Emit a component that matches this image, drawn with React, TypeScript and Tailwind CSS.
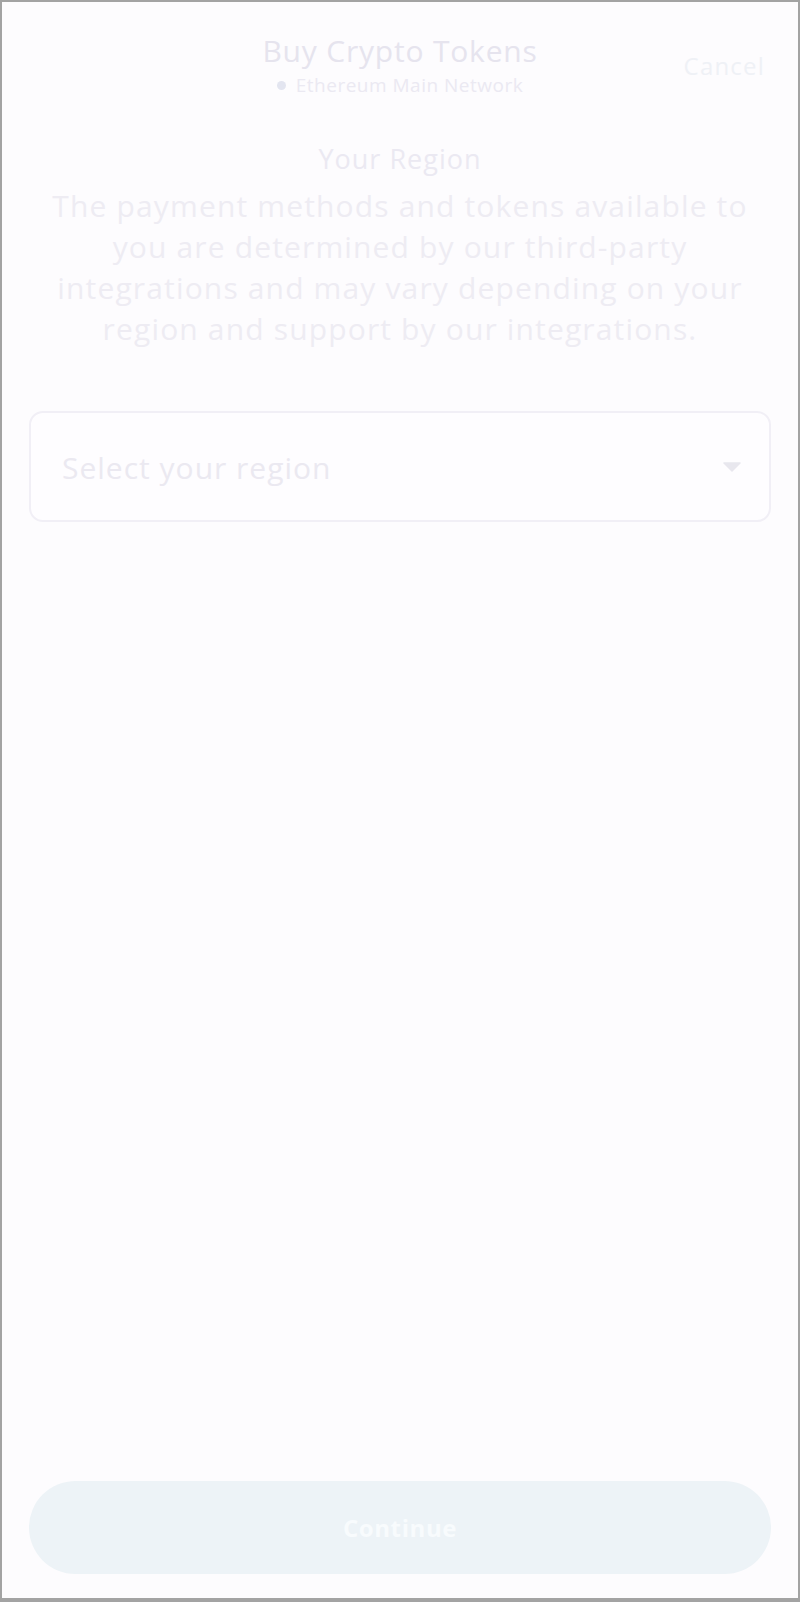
import React from 'react';

const FONT = { fontFamily: '"Open Sans", "Noto Sans", sans-serif' };

function Header() {
  return (
    <div className="relative pt-[31px] flex flex-col items-center">
      <h1 className="text-[30px] leading-[36px] tracking-[0.8px] text-[#e6e4ee]">Buy Crypto Tokens</h1>
      <div className="mt-[5px] flex items-center gap-[10px] text-[19px] leading-[22px] tracking-[0.5px] text-[#ebe9f2]">
        <span className="w-[9px] h-[9px] rounded-full bg-[#e3e5f0]" />
        <span>Ethereum Main Network</span>
      </div>
      <button className="absolute right-[33px] top-[49px] text-[24px] leading-[30px] tracking-[1.2px] text-[#eff1f6]">
        Cancel
      </button>
    </div>
  );
}

export default function App() {
  return (
    <div
      style={FONT}
      className="w-[800px] h-[1602px] bg-[#fdfcfe] border-2 border-b-[4px] border-[#a3a3a3] flex flex-col"
    >
      <Header />

      <div className="mt-[48px] flex flex-col items-center text-center">
        <h2 className="text-[27px] leading-[30px] tracking-[1px] text-[#ebe9f2]">Your Region</h2>
        <p className="mt-[11px] text-[30px] leading-[41px] tracking-[1.15px] text-[#eeecf3]">
          The payment methods and tokens available to
          <br />
          you are determined by our third-party
          <br />
          integrations and may vary depending on your
          <br />
          region and support by our integrations.
        </p>
      </div>

      <div className="mx-[27px] mt-[62px] h-[111px] rounded-[14px] border-2 border-[#f1eff6] bg-[#fefdff] flex items-center justify-between pl-[31px] pr-[28px]">
        <span className="mt-[2px] text-[30px] leading-[36px] tracking-[1px] text-[#ebe9f1]">Select your region</span>
        <svg width="18" height="10" viewBox="0 0 18 10">
          <path d="M1 1 L17 1 L9 9 Z" fill="#e8e7ee" stroke="#e8e7ee" strokeWidth="1.5" strokeLinejoin="round" />
        </svg>
      </div>

      <div className="flex-1" />

      <div className="mx-[27px] mb-[24px]">
        <button className="w-full h-[93px] rounded-full bg-[#edf3f7] text-[24px] font-bold tracking-[0.6px] text-[#f8fbfd]">
          Continue
        </button>
      </div>
    </div>
  );
}
